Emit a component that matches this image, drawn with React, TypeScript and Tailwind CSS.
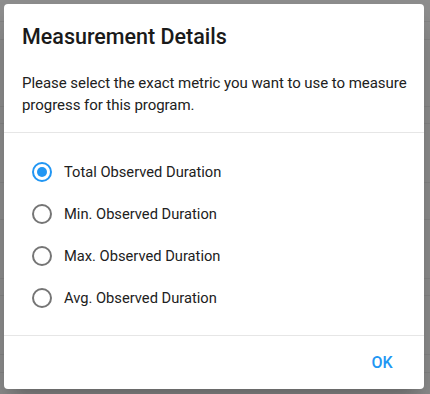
import { useState } from 'react';

const OPTIONS = [
  'Total Observed Duration',
  'Min. Observed Duration',
  'Max. Observed Duration',
  'Avg. Observed Duration',
];

// faint table rows behind the backdrop
const BG_ROWS = [22, 18, 67, 17, 59, 37, 59, 17, 59, 18];

function Radio({ checked }: { checked: boolean }) {
  return (
    <span
      className={`w-5 h-5 rounded-full border-2 flex items-center justify-center shrink-0 ${checked ? 'border-[#2196f3]' : 'border-[#757575]'}`}
    >
      {checked && <span className="w-2.5 h-2.5 rounded-full bg-[#2196f3]" />}
    </span>
  );
}

export default function App() {
  const [selected, setSelected] = useState(0);

  return (
    <div className="relative w-[430px] h-[394px] overflow-hidden bg-[#8e8e8e] font-['Roboto',sans-serif]">
      {/* Page behind the backdrop */}
      <div className="flex flex-col">
        {BG_ROWS.map((h, i) => (
          <div key={i} className="border-b border-[#858585]" style={{ height: h }} />
        ))}
      </div>

      {/* Dialog */}
      <div className="absolute left-[4px] top-[4px] w-[420px] h-[385px] bg-white rounded-[4px] shadow-[0_11px_15px_-7px_rgba(0,0,0,0.2),0_24px_38px_3px_rgba(0,0,0,0.14)] flex flex-col">
        <h2 className="px-[18px] pt-[19px] text-[21.5px] leading-[28px] font-medium text-[#1a1a1a]">
          Measurement Details
        </h2>
        <p className="pl-[18px] pr-[8px] pt-[21px] pb-[16px] text-[15px] leading-[22px] tracking-[-0.05px] text-[#212121]">
          Please select the exact metric you want to use to measure progress for this program.
        </p>

        <div className="border-t border-[#e6e6e6] pt-[18px] pb-[16px] px-[28px] flex flex-col">
          {OPTIONS.map((label, i) => (
            <label
              key={label}
              className="h-[42px] flex items-center gap-[12px] cursor-pointer"
              onClick={() => setSelected(i)}
            >
              <Radio checked={selected === i} />
              <span className="text-[14.7px] text-[#212121]">{label}</span>
            </label>
          ))}
        </div>

        <div className="border-t border-[#e6e6e6] flex-1 flex items-center justify-end pr-[10px]">
          <button className="h-9 min-w-[64px] px-2 rounded text-[16px] font-medium text-[#2196f3]">
            OK
          </button>
        </div>
      </div>
    </div>
  );
}
